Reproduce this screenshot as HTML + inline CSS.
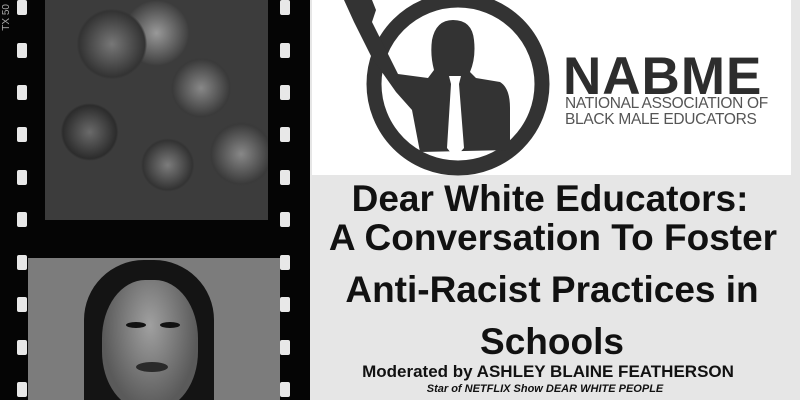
<!DOCTYPE html>
<html><head><style>
body{margin:0;width:800px;height:400px;overflow:hidden;background:#000;position:relative;font-family:"Liberation Sans",Arial,sans-serif}
.a{position:absolute}
.h{position:absolute;width:10px;height:15px;background:#e8e8e8;border-radius:2px}
.t{position:absolute;left:310px;width:490px;text-align:center;font-weight:bold;color:#111;white-space:nowrap}
</style></head><body>
<div class="a" style="left:0;top:0;width:310px;height:400px;background:#050505"></div>
<div class="a" style="left:45px;top:0;width:223px;height:220px;background:radial-gradient(circle at 30% 20%,#777 0,#333 14%,transparent 15%),radial-gradient(circle at 70% 40%,#888 0,#3a3a3a 14%,transparent 15%),radial-gradient(circle at 20% 60%,#6a6a6a 0,#2c2c2c 12%,transparent 13%),radial-gradient(circle at 55% 75%,#7c7c7c 0,#333 12%,transparent 13%),radial-gradient(circle at 88% 70%,#888 0,#3a3a3a 12%,transparent 13%),radial-gradient(circle at 50% 15%,#999 0,#444 14%,transparent 15%),#3c3c3c"></div>
<div class="a" style="left:28px;top:258px;width:252px;height:142px;background:#7c7c7c;overflow:hidden">
  <div class="a" style="left:56px;top:2px;width:130px;height:160px;background:#141414;border-radius:60px 60px 10px 10px"></div>
  <div class="a" style="left:74px;top:22px;width:96px;height:130px;background:radial-gradient(ellipse at 50% 35%,#a0a0a0,#5a5a5a 70%);border-radius:45%"></div>
  <div class="a" style="left:98px;top:64px;width:20px;height:6px;background:#111;border-radius:50%"></div>
  <div class="a" style="left:132px;top:64px;width:20px;height:6px;background:#111;border-radius:50%"></div>
  <div class="a" style="left:108px;top:104px;width:32px;height:10px;background:#2a2a2a;border-radius:50%"></div>
</div>
<div class="a" style="left:0;top:0;width:8px;height:400px">
<span class="a" style="left:1px;top:4px;color:#aaa;font-size:10px;writing-mode:vertical-rl;transform:rotate(180deg)">TX 50</span></div>
<div class="h" style="left:17px;top:0"></div><div class="h" style="left:17px;top:43px"></div><div class="h" style="left:17px;top:85px"></div><div class="h" style="left:17px;top:127px"></div><div class="h" style="left:17px;top:170px"></div><div class="h" style="left:17px;top:212px"></div><div class="h" style="left:17px;top:255px"></div><div class="h" style="left:17px;top:297px"></div><div class="h" style="left:17px;top:340px"></div><div class="h" style="left:17px;top:382px"></div>
<div class="h" style="left:280px;top:0"></div><div class="h" style="left:280px;top:43px"></div><div class="h" style="left:280px;top:85px"></div><div class="h" style="left:280px;top:127px"></div><div class="h" style="left:280px;top:170px"></div><div class="h" style="left:280px;top:212px"></div><div class="h" style="left:280px;top:255px"></div><div class="h" style="left:280px;top:297px"></div><div class="h" style="left:280px;top:340px"></div><div class="h" style="left:280px;top:382px"></div>
<div class="a" style="left:310px;top:0;width:490px;height:400px;background:#e6e6e6"></div>
<div class="a" style="left:312px;top:0;width:479px;height:175px;background:#fff"></div>
<svg class="a" style="left:312px;top:0" width="250" height="176" viewBox="312 0 250 176">
<circle cx="458" cy="84" r="84" fill="none" stroke="#333" stroke-width="15"/>
<path d="M344 0 L372 0 L376 10 L372 22 L386 50 L398 74 L428 78 L434 70 Q430 55 432 40 Q436 20 453 20 Q472 20 474 40 Q476 58 470 72 L476 78 L500 82 Q510 88 510 108 L510 150 L420 152 L412 110 L396 92 L372 58 L354 22 Z" fill="#333"/>
<path d="M449 76 L461 76 L459 84 L464 148 L455 158 L447 148 L451 84 Z" fill="#fff"/>
</svg>
<div class="a" style="left:563px;top:46px;font-size:53px;font-weight:bold;color:#2d2d2d;letter-spacing:1px">NABME</div>
<div class="a" style="left:565px;top:96px;font-size:15.5px;line-height:16px;color:#555;letter-spacing:-0.3px">NATIONAL ASSOCIATION OF<br>BLACK MALE EDUCATORS</div>
<div class="t" style="top:181px;font-size:37px;line-height:36px;left:305px">Dear White Educators:</div>
<div class="t" style="top:220px;font-size:37px;line-height:36px;left:308px">A Conversation To Foster</div>
<div class="t" style="top:272px;font-size:37px;line-height:36px;left:307px">Anti-Racist Practices in</div>
<div class="t" style="top:324px;font-size:37px;line-height:36px;left:307px">Schools</div>
<div class="t" style="top:363px;font-size:17px;line-height:18px;left:303px">Moderated by ASHLEY BLAINE FEATHERSON</div>
<div class="t" style="top:383px;font-size:11px;line-height:12px;font-style:italic;left:300px">Star of NETFLIX Show DEAR WHITE PEOPLE</div>
</body></html>
